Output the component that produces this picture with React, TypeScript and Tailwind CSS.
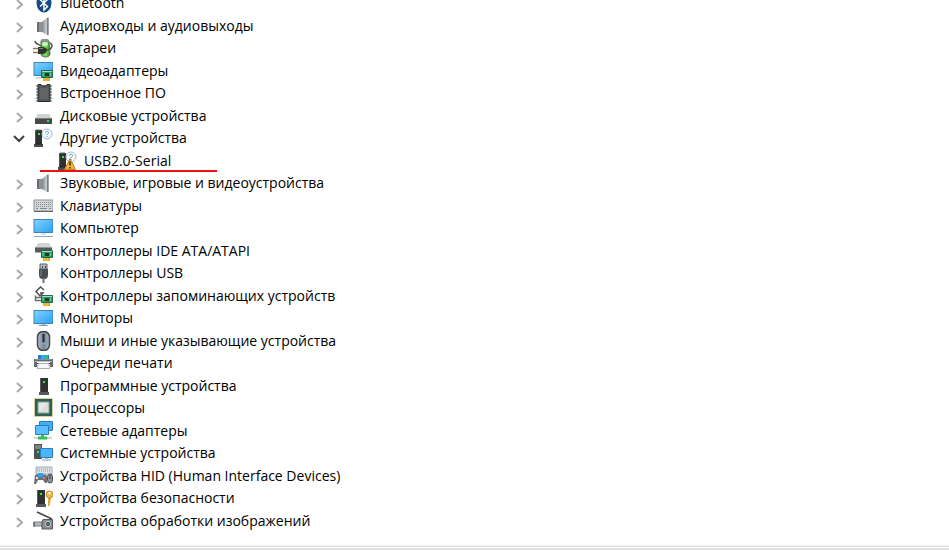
import { useState } from "react";
import type { ReactNode } from "react";
import clsx from "clsx";

type Device = {
  label: string;
  icon: ReactNode;
  child?: boolean;
};

const Board = () => (
  <>
    <path d="M10 17h7v3h-7z" fill="#f3aa1c" />
    <path d="M12 17v3M14.500 17v3" stroke="#fbd88a" strokeWidth="0.500" />
    <path d="M8.500 9.500h11v7h-11z" fill="#2b9c64" stroke="#1d6a4c" strokeWidth="1" />
    <path d="M9 10.500h10" stroke="#a5dcbd" strokeWidth="1" />
    <path d="M12 12h4v3h-4z" fill="#163d2e" />
    <path d="M10 12v3M17.500 12v3" stroke="#7dc79b" strokeWidth="1" />
  </>
);

const Screen = () => (
  <>
    <defs>
      <linearGradient id="screen" x1="0" y1="0" x2="1" y2="1">
        <stop offset="0" stopColor="#84d2ff" />
        <stop offset="1" stopColor="#2aa0f5" />
      </linearGradient>
    </defs>
    <rect x="1" y="2.500" width="19" height="13" fill="url(#screen)" stroke="#3b86b5" strokeWidth="1" />
  </>
);

const Tower = () => (
  <>
    <path d="M2 2h7v14H2z" fill="#2f3133" />
    <path d="M2 2h1v14H2z" fill="#55585b" />
    <path d="M3 2h5" stroke="#6b6e70" strokeWidth="1" />
    <path d="M1 16h9v3H1z" fill="#4c4f52" />
    <path d="M2 16h7" stroke="#202224" strokeWidth="1" />
    <path d="M5 5h2v2H5z" fill="#2df02d" />
  </>
);

const Question = () => (
  <>
    <circle cx="14" cy="6" r="5" fill="#f4f8fb" stroke="#a9bac8" strokeWidth="1" />
    <path d="M12.500 4.500c.2-1.500 3.100-1.500 3 0 0 1.200-1.500 1.200-1.500 2.500M14 8v1" fill="none" stroke="#4a9ddb" strokeWidth="1" />
  </>
);

const Speaker = () => (
  <>
    <defs>
      <linearGradient id="cone">
        <stop offset="0" stopColor="#7e8387" />
        <stop offset="0.600" stopColor="#c9cdd0" />
        <stop offset="1" stopColor="#999ea2" />
      </linearGradient>
    </defs>
    <path d="M4 6h5v10H4z" fill="#8d9296" />
    <path d="M4 6h2v10H4z" fill="#686d71" />
    <path d="M9 6l5-4.500h2v17.500h-2l-5-3z" fill="url(#cone)" />
    <path d="M14.500 2v17" stroke="#7b8084" strokeWidth="1" />
  </>
);

const Bluetooth = () => (
  <>
    <ellipse cx="11" cy="10" rx="7.500" ry="9.500" fill="#174b85" />
    <path d="M7 6.500l7.500 7L11 17V3l3.500 3.500-7.500 7" fill="none" stroke="#fff" strokeWidth="1.500" />
  </>
);

const Battery = () => (
  <>
    <defs>
      <linearGradient id="cell">
        <stop offset="0" stopColor="#3fae35" />
        <stop offset="0.500" stopColor="#7be468" />
        <stop offset="1" stopColor="#37882f" />
      </linearGradient>
    </defs>
    <path d="M8 3c0-2 7-2 8 0l1 13c0 4-9 4-9 0z" fill="url(#cell)" stroke="#5b6a58" strokeWidth="1" />
    <ellipse cx="12" cy="2.500" rx="4" ry="1.500" fill="#8c928a" />
    <ellipse cx="12" cy="6" rx="3" ry="2" fill="#c6f8b8" />
    <path d="M14 12c6-1 6-6 3-7M2 3c0 3 4 3 6 5" fill="none" stroke="#4d554c" strokeWidth="1.500" />
    <path d="M5 9h4c3 0 5 1 5 3s-2 4-5 4H5z" fill="#33342f" />
    <path d="M0 10.500h5M0 14.500h5" stroke="#8b7c50" strokeWidth="1.500" />
    <path d="M6 10.500h4" stroke="#85887e" strokeWidth="1" />
  </>
);

const DisplayAdapter = () => (
  <>
    <g transform="translate(0 -1)">
      <Screen />
    </g>
    <path d="M3 17h5" stroke="#93b6cc" strokeWidth="1" />
    <Board />
  </>
);

const Firmware = () => (
  <>
    <path d="M3 3h16M3 6h16M3 9h16M3 12h16M3 15h16M3 18h16" stroke="#54585a" strokeWidth="1" />
    <path d="M5 1.500h3c0 2 6 2 6 0h3v17H5z" fill="#55595b" stroke="#292b2c" strokeWidth="1" />
    <path d="M7 5h8v11H7z" fill="#606466" />
  </>
);

const Disk = () => (
  <>
    <path d="M5 8h11l3 5H2z" fill="#cfd2d3" />
    <path d="M2 12h17v6H2z" fill="#45494b" />
    <path d="M2 12.500h17" stroke="#777c7e" strokeWidth="1" />
    <path d="M14 14h2v2h-2z" fill="#31e24a" />
  </>
);

const Unknown = () => (
  <>
    <Tower />
    <Question />
  </>
);

const UnknownWarning = () => (
  <>
    <Tower />
    <Question />
    <path d="M13 7.500l5.500 11h-11z" fill="#f2b233" stroke="#bd8528" strokeWidth="1" strokeLinejoin="round" />
    <path d="M13 10.500v4M13 16v1.500" stroke="#372611" strokeWidth="1.500" />
  </>
);

const Keyboard = () => (
  <>
    <path d="M1 4h19v11H1z" fill="#d5d8da" stroke="#8d9296" strokeWidth="1" />
    <path d="M3 6.500h15M3 8.500h15M3 10.500h15" stroke="#83888b" strokeWidth="1" strokeDasharray="1 1" />
    <path d="M3 12.500h2M7 12.500h7M16 12.500h2" stroke="#83888b" strokeWidth="1" />
    <path d="M1 15.500h19" stroke="#62676a" strokeWidth="1" />
  </>
);

const Computer = () => (
  <>
    <g transform="translate(0 -1)">
      <Screen />
    </g>
    <path d="M8 16h5" stroke="#adc7d6" strokeWidth="1" />
    <path d="M1 18.500h19" stroke="#8ba5b6" strokeWidth="1" />
  </>
);

const Ide = () => (
  <>
    <path d="M5 2h11l3 5H2z" fill="#d2d4d5" />
    <path d="M2 6.500h17v5H2z" fill="#55595b" />
    <Board />
  </>
);

const Usb = () => (
  <>
    <path d="M7 1h7v5H7z" fill="#b9bdbf" stroke="#5e6366" strokeWidth="1" />
    <path d="M9 3h1v2H9zM12 3h1v2h-1z" fill="#3d4042" />
    <path d="M6 6h9v6c0 3-2 4-3 4H9c-1 0-3-1-3-4z" fill="#4b4f51" />
    <path d="M8 7v6" stroke="#7e8386" strokeWidth="1" />
    <path d="M10.500 15v5" stroke="#6d7173" strokeWidth="2" />
  </>
);

const Storage = () => (
  <>
    <path d="M11 4L7.500 1 3 5.500 7 10l3-3H7" fill="none" stroke="#4a4e50" strokeWidth="1.500" />
    <path d="M2.500 9.500v5H8M3 11.500h5" fill="none" stroke="#6a6e70" strokeWidth="1.500" />
    <Board />
  </>
);

const Monitor = () => (
  <>
    <Screen />
    <path d="M8 16.500h5" stroke="#a9c5d5" strokeWidth="1" />
    <path d="M6 17.500h9" stroke="#7f9fb4" strokeWidth="1" />
  </>
);

const Mouse = () => (
  <>
    <defs>
      <linearGradient id="mouse">
        <stop offset="0" stopColor="#b8c5d0" />
        <stop offset="0.500" stopColor="#74869a" />
        <stop offset="1" stopColor="#a8b5c0" />
      </linearGradient>
    </defs>
    <rect x="4.500" y="0.500" width="12" height="19" rx="5.500" fill="url(#mouse)" stroke="#43484d" strokeWidth="1.500" />
    <path d="M10.500 3v8" stroke="#24282c" strokeWidth="2" />
    <path d="M6.500 12c2 1 6 1 8 0" fill="none" stroke="#93a3b1" strokeWidth="1" />
  </>
);

const Printer = () => (
  <>
    <path d="M5 2h11v5H5z" fill="#2f78c8" />
    <path d="M8 2h4v4H8z" fill="#20b5f0" />
    <path d="M12 2h3v4h-3z" fill="#2fc16c" />
    <path d="M1 6h19v8h-3V9H4v5H1z" fill="#676b6e" />
    <path d="M2 6.500h17" stroke="#8c9092" strokeWidth="1" />
    <path d="M2 8.500h17" stroke="#b9bdbf" strokeWidth="1" />
    <path d="M4 10h13v1H4z" fill="#3d4042" />
    <path d="M5.500 10.500h10l1.500 5H4z" fill="#f4f9fc" stroke="#a9b1b5" strokeWidth="1" />
  </>
);

const Software = () => (
  <>
    <path d="M7 2h8v14H7z" fill="#2f3133" />
    <path d="M6 16h10v3H6z" fill="#55585b" />
    <path d="M7 2h1v14H7z" fill="#5a5d60" />
    <path d="M10 5h2v2h-2z" fill="#2df02d" />
  </>
);

const Processor = () => (
  <>
    <rect x="1.500" y="0.500" width="18" height="18" fill="none" stroke="#b99c48" strokeWidth="1" strokeDasharray="1 1" />
    <path d="M2 1h17v17H2z" fill="#2c6250" />
    <path d="M5 4h11v11H5z" fill="#dcdedd" stroke="#8fa399" strokeWidth="1" />
    <path d="M6 5h9L6 14z" fill="#e8e9e9" />
  </>
);

const Network = () => (
  <>
    <path d="M6.500 0.500h13v9h-13z" fill="#41adf5" stroke="#2d7fb9" strokeWidth="1" />
    <path d="M2.500 4.500h13v9h-13z" fill="#5abfff" stroke="#2d7fb9" strokeWidth="1" />
    <path d="M8 14h3v2H8z" fill="#54b45e" />
    <path d="M1 17h18" stroke="#d0d3d1" strokeWidth="2" />
    <path d="M5 17h9" stroke="#32c355" strokeWidth="3" />
  </>
);

const System = () => (
  <>
    <path d="M1 1h8v15H1z" fill="#4c5154" />
    <path d="M2 3h6M2 5h6" stroke="#aeb4b7" strokeWidth="1" />
    <path d="M4 8h2v2H4z" fill="#35e35a" />
    <path d="M7.500 5.500h12v9h-12z" fill="#4bb5fa" stroke="#2d7fb9" strokeWidth="1" />
    <path d="M9 17h9" stroke="#7a9db4" strokeWidth="1" />
    <path d="M12 15h3v1h-3z" fill="#a8c4d4" />
  </>
);

const Hid = () => (
  <>
    <path d="M3 1h16v7H3z" fill="#e0e3e5" stroke="#a5aaad" strokeWidth="1" />
    <path d="M4 3h14M4 5h14" stroke="#8e9498" strokeWidth="1" strokeDasharray="1 1" />
    <path d="M1 18l1-9 3-1 2 1h3l2-1 2 2v7h-2l-2-3H5l-2 4z" fill="#6b7175" />
    <path d="M5 7h5v4H5z" fill="#2d9fee" />
    <path d="M3 11h2v2H3z" fill="#e3e7e9" />
    <path d="M10 11h2v2h-2z" fill="#e0734d" />
    <rect x="14.500" y="8" width="5" height="9" rx="2.500" fill="#8c959c" stroke="#4e555b" strokeWidth="1" />
    <path d="M17 9v4" stroke="#353b40" strokeWidth="1" />
  </>
);

const Security = () => (
  <>
    <path d="M4 2h8v14H4z" fill="#2f3133" />
    <path d="M3 16h10v3H3z" fill="#55585b" />
    <path d="M4 2h1v14H4z" fill="#5a5d60" />
    <path d="M7 5h2v2H7z" fill="#2df02d" />
    <path d="M15 9h3v3l-1 1 1 1-1 1v2l-1.500 1.500L15 18z" fill="#e0ab42" />
    <circle cx="16.500" cy="6.500" r="3.500" fill="#edbd55" stroke="#bb8a30" strokeWidth="1" />
    <path d="M15.500 4h2v2h-2z" fill="#fff" />
  </>
);

const Imaging = () => (
  <>
    <path d="M4 1l15 7" stroke="#424648" strokeWidth="1.500" />
    <path d="M1 11h8v4H1z" fill="#b3b7b9" stroke="#7b8082" strokeWidth="1" />
    <path d="M1 11v5" stroke="#45494b" strokeWidth="1" />
    <path d="M10 8.500h9.500V18H9v-7z" fill="#8b9092" stroke="#56595b" strokeWidth="1" />
    <circle cx="15" cy="13" r="2.500" fill="#293136" stroke="#d1d5d7" strokeWidth="1" />
    <circle cx="15" cy="13" r="1" fill="#42b39b" />
  </>
);

const devices: Device[] = [
  { label: "Bluetooth", icon: <Bluetooth /> },
  { label: "Аудиовходы и аудиовыходы", icon: <Speaker /> },
  { label: "Батареи", icon: <Battery /> },
  { label: "Видеоадаптеры", icon: <DisplayAdapter /> },
  { label: "Встроенное ПО", icon: <Firmware /> },
  { label: "Дисковые устройства", icon: <Disk /> },
  { label: "Другие устройства", icon: <Unknown /> },
  { label: "USB2.0-Serial", icon: <UnknownWarning />, child: true },
  { label: "Звуковые, игровые и видеоустройства", icon: <Speaker /> },
  { label: "Клавиатуры", icon: <Keyboard /> },
  { label: "Компьютер", icon: <Computer /> },
  { label: "Контроллеры IDE ATA/ATAPI", icon: <Ide /> },
  { label: "Контроллеры USB", icon: <Usb /> },
  { label: "Контроллеры запоминающих устройств", icon: <Storage /> },
  { label: "Мониторы", icon: <Monitor /> },
  { label: "Мыши и иные указывающие устройства", icon: <Mouse /> },
  { label: "Очереди печати", icon: <Printer /> },
  { label: "Программные устройства", icon: <Software /> },
  { label: "Процессоры", icon: <Processor /> },
  { label: "Сетевые адаптеры", icon: <Network /> },
  { label: "Системные устройства", icon: <System /> },
  { label: "Устройства HID (Human Interface Devices)", icon: <Hid /> },
  { label: "Устройства безопасности", icon: <Security /> },
  { label: "Устройства обработки изображений", icon: <Imaging /> },
];

function Chevron({ open }: { open: boolean }) {
  return (
    <svg viewBox="0 0 14 14" className="size-3.5" fill="none" strokeWidth="2" aria-hidden="true">
      {open ? <path d="M2 5l5 5 5-5" stroke="#404040" /> : <path d="M5 4l5 4.500L5 13" stroke="#a9a9a9" />}
    </svg>
  );
}

export default function App() {
  const [expanded, setExpanded] = useState("Другие устройства");

  return (
    <main className="overflow-hidden bg-white font-['Open_Sans','Noto_Sans',sans-serif] text-[14px] leading-5 text-black">
      <ul role="tree" aria-label="Диспетчер устройств" className="-mt-2 mb-[13px]">
        {devices.map(({ label, icon, child }) => (
          <li
            key={label}
            role="treeitem"
            aria-level={child ? 2 : 1}
            aria-expanded={child ? undefined : label === expanded}
            className={clsx("relative flex items-center whitespace-nowrap odd:h-[22px] even:h-[23px]", child ? "pl-[57px]" : "pl-3")}
          >
            {!child && (
              <button
                type="button"
                aria-label={label}
                onClick={() => setExpanded(label === expanded ? "" : label)}
                className="mr-[7px] flex size-3.5 shrink-0 items-center justify-center"
              >
                <Chevron open={label === expanded} />
              </button>
            )}
            <svg viewBox="0 0 20 20" className="size-5 shrink-0" aria-hidden="true">
              {icon}
            </svg>
            <span className="ml-[7px]">{label}</span>
            {child && <span className="absolute bottom-0 left-10 h-0.5 w-[177px] bg-[#ee1111]" />}
          </li>
        ))}
      </ul>
      <div className="border-t border-[#f0f0f0]">
        <div className="h-0.5 border-t border-[#dfdfdf]" />
        <div className="h-0.5 bg-[#e1e1e1]" />
      </div>
    </main>
  );
}
